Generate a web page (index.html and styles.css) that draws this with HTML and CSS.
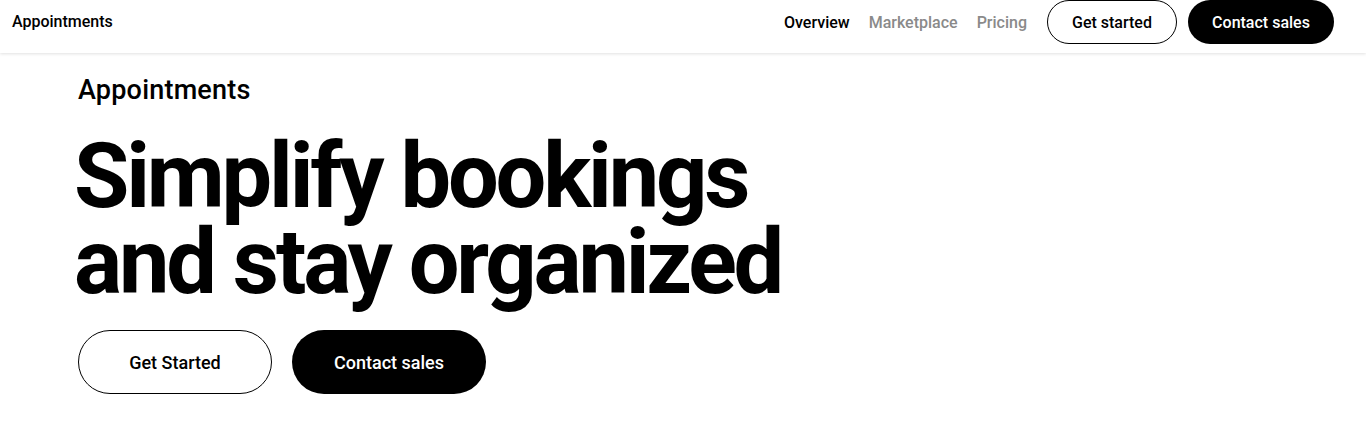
FILE: index.html
```html
<!DOCTYPE html>
<html lang="en">
<head>
  <meta charset="UTF-8">
  <meta name="viewport" content="width=device-width, initial-scale=1.0">
  <title>Appointments</title>
  <link rel="stylesheet" href="styles.css">
</head>
<body>
  <header class="topbar">
    <a class="brand" href="#">Appointments</a>
    <nav class="nav">
      <a class="nav-link active" href="#">Overview</a>
      <a class="nav-link" href="#">Marketplace</a>
      <a class="nav-link" href="#">Pricing</a>
      <a class="pill pill-outline" href="#">Get started</a>
      <a class="pill pill-dark" href="#">Contact sales</a>
    </nav>
  </header>

  <section class="hero">
    <p class="eyebrow">Appointments</p>
    <h1 class="headline">Simplify bookings<br>and stay organized</h1>
    <div class="actions">
      <a class="btn btn-outline" href="#">Get Started</a>
      <a class="btn btn-dark" href="#">Contact sales</a>
    </div>
  </section>
</body>
</html>
```

FILE: styles.css
```css
body {
  font-family: Roboto, "Liberation Sans", Arial, sans-serif;
  margin: 0;
  padding: 0;
  background: #fff;
  color: #000;
}

a {
  text-decoration: none;
  color: inherit;
}

.topbar {
  display: flex;
  align-items: flex-start;
  justify-content: space-between;
  height: 53px;
  padding: 0 32px 0 12px;
  box-shadow: 0 1px 3px rgba(0, 0, 0, 0.12);
}

.brand {
  font-size: 16px;
  font-weight: 500;
  line-height: 44px;
}

.nav {
  display: flex;
  align-items: center;
  gap: 19px;
  height: 44px;
}

.nav-link {
  font-size: 16px;
  font-weight: 500;
  color: #8a8a8a;
}

.nav-link.active {
  color: #000;
}

.pill {
  display: flex;
  align-items: center;
  justify-content: center;
  height: 44px;
  box-sizing: border-box;
  border-radius: 22px;
  font-size: 16px;
  font-weight: 500;
}

.pill-outline {
  width: 130px;
  border: 1px solid #000;
  margin-left: 1px;
}

.pill-dark {
  width: 146px;
  background: #000;
  color: #fff;
  margin-left: -8px;
}

.hero {
  padding: 20px 0 0 78px;
}

.eyebrow {
  margin: 0;
  font-size: 27px;
  font-weight: 500;
  line-height: 34px;
  letter-spacing: 0.2px;
}

.headline {
  margin: 27px 0 0 -4px;
  font-size: 90px;
  font-weight: 700;
  line-height: 86px;
  letter-spacing: -3.2px;
}

.actions {
  display: flex;
  gap: 20px;
  margin-top: 24px;
}

.btn {
  display: flex;
  align-items: center;
  justify-content: center;
  width: 194px;
  height: 64px;
  box-sizing: border-box;
  border-radius: 32px;
  font-size: 18px;
  font-weight: 500;
}

.btn-outline {
  border: 1px solid #000;
}

.btn-dark {
  background: #000;
  color: #fff;
}
```
